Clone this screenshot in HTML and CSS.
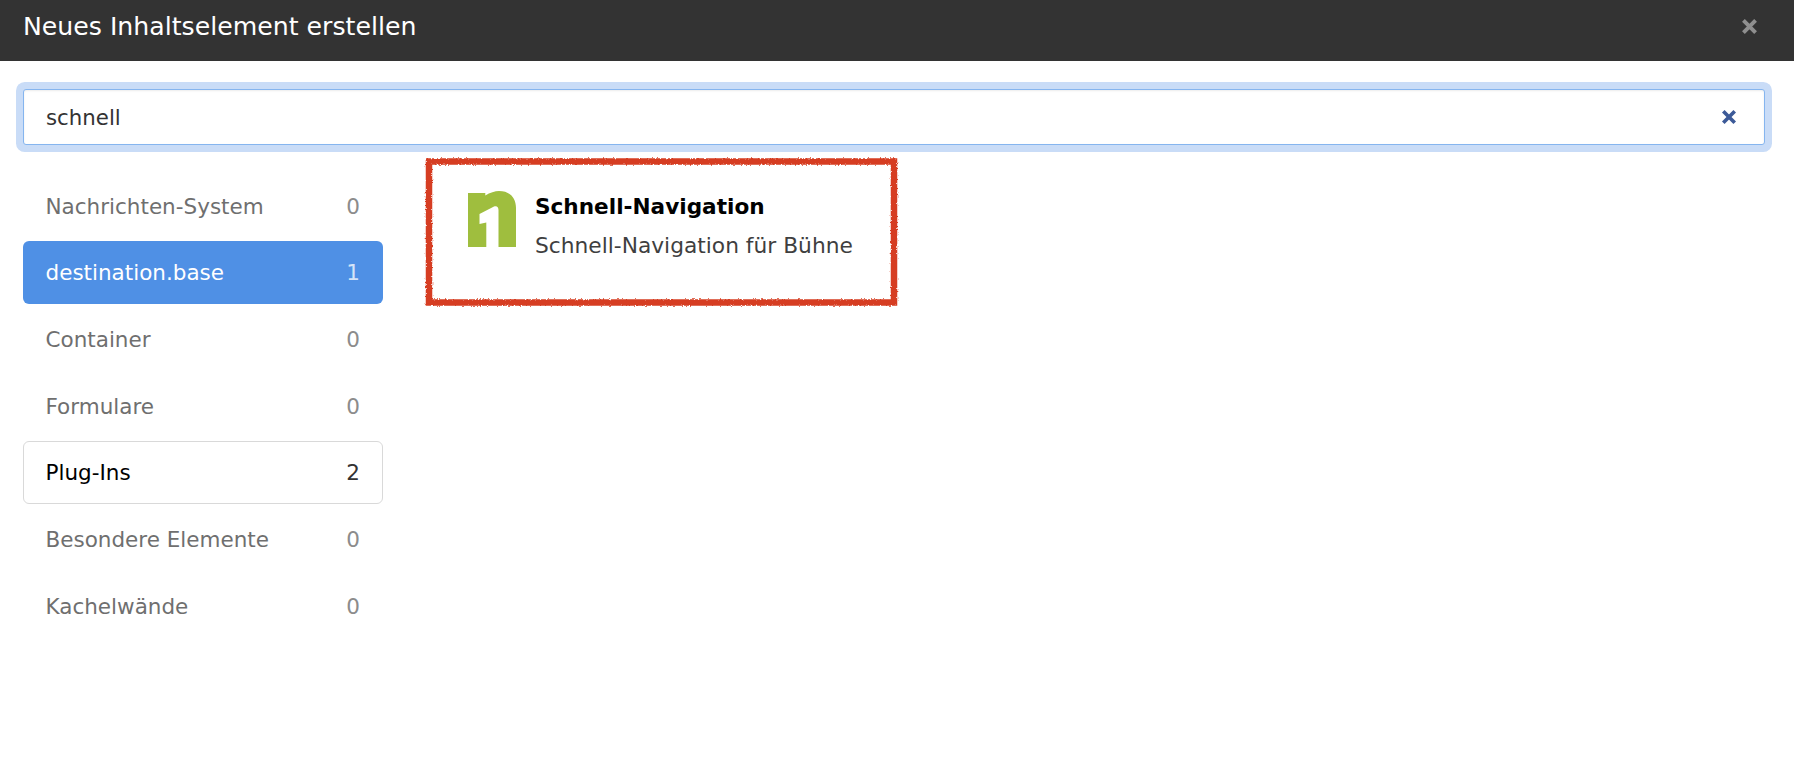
FILE: index.html
```html
<!DOCTYPE html>
<html lang="de">
<head>
    <meta charset="UTF-8">
    <meta name="viewport" content="width=device-width, initial-scale=1.0">
    <title>Neues Inhaltselement erstellen</title>
    <link rel="stylesheet" href="styles.css">
</head>
<body>
    <div class="modal-header">
        <h1 class="modal-title">Neues Inhaltselement erstellen</h1>
        <svg class="close-icon" viewBox="0 0 14 14"><path d="M2 2L12 12M12 2L2 12"/></svg>
    </div>
    <div class="modal-body">
        <div class="search">
            <input class="search-input" type="text" value="schnell">
            <svg class="clear-icon" viewBox="0 0 14 14"><path d="M2 2L12 12M12 2L2 12"/></svg>
        </div>
        <div class="content">
            <ul class="categories">
                <li class="category"><span>Nachrichten-System</span><span class="count">0</span></li>
                <li class="category active"><span>destination.base</span><span class="count">1</span></li>
                <li class="category"><span>Container</span><span class="count">0</span></li>
                <li class="category"><span>Formulare</span><span class="count">0</span></li>
                <li class="category outlined"><span>Plug-Ins</span><span class="count">2</span></li>
                <li class="category"><span>Besondere Elemente</span><span class="count">0</span></li>
                <li class="category"><span>Kachelwände</span><span class="count">0</span></li>
            </ul>
            <div class="results">
                <div class="element">
                    <svg class="scribble" viewBox="0 0 473 148">
                        <defs>
                            <filter id="rough" x="-3%" y="-6%" width="106%" height="112%">
                                <feTurbulence type="fractalNoise" baseFrequency="0.6" numOctaves="2" seed="4"/>
                                <feDisplacementMap in="SourceGraphic" scale="3"/>
                            </filter>
                        </defs>
                        <rect x="4" y="3.500" width="465" height="141" filter="url(#rough)"/>
                    </svg>
                    <svg class="logo" viewBox="0 0 48 56">
                        <path d="M0 2H17.300V4.500C22 1.500 27 0 31 0C42 0 48 7 48 17V56H30.500V19C30.500 15.500 28.500 14.500 26 15.500L11.500 23V33L18.300 31.500V56H0Z"/>
                    </svg>
                    <div class="element-text">
                        <div class="element-name">Schnell-Navigation</div>
                        <div class="element-desc">Schnell-Navigation für Bühne</div>
                    </div>
                </div>
            </div>
        </div>
    </div>
</body>
</html>
```

FILE: styles.css
```css
* {
    margin: 0;
    padding: 0;
    box-sizing: border-box;
    font-family: 'DejaVu Sans', Verdana, sans-serif;
}
body {
    background: #fff;
    height: 780px;
    overflow: hidden;
}
.modal-header {
    display: flex;
    align-items: center;
    justify-content: space-between;
    height: 61px;
    padding: 0 36px 8px 23px;
    background: #333;
}
.modal-title {
    font-size: 25.2px;
    font-weight: normal;
    color: #fff;
}
.close-icon {
    width: 17px;
    height: 17px;
    fill: none;
    stroke: #8f8f8f;
    stroke-width: 3.2;
}
.modal-body {
    padding: 28px 29px 0 23px;
}
.search {
    position: relative;
}
.search-input {
    display: block;
    width: 100%;
    height: 56px;
    padding: 0 22px;
    font-size: 21.3px;
    color: #333;
    background: #fff;
    border: 1px solid #85b5ef;
    border-radius: 3px;
    outline: none;
    box-shadow: 0 0 0 7px #c9dcf7, inset 0 1px 2px rgba(0, 0, 0, 0.08);
}
.clear-icon {
    position: absolute;
    top: 20px;
    right: 28px;
    width: 16px;
    height: 16px;
    fill: none;
    stroke: #3c5a98;
    stroke-width: 3.2;
}
.content {
    display: flex;
    gap: 42px;
}
.categories {
    display: grid;
    grid-auto-rows: 62.67px;
    gap: 4px;
    flex: none;
    width: 360px;
    padding-top: 29.4px;
    list-style: none;
}
.category {
    display: flex;
    align-items: center;
    justify-content: space-between;
    padding: 1px 22px 0 21.5px;
    font-size: 21.5px;
    color: #6f6f6f;
    border: 1px solid transparent;
    border-radius: 6px;
}
.count {
    color: #8c8c8c;
}
.category.active {
    background: #4f90e5;
    color: #fff;
}
.category.active .count {
    color: #d5e4f8;
}
.category.outlined {
    color: #000;
    border-color: #d9d9d9;
}
.category.outlined .count {
    color: #333;
}
.results {
    padding-top: 13px;
}
.element {
    position: relative;
    display: flex;
    gap: 19px;
    width: 473px;
    height: 148px;
    padding: 33px 0 0 43px;
}
.scribble {
    position: absolute;
    top: 0;
    left: 0;
    width: 473px;
    height: 148px;
    overflow: visible;
}
.scribble rect {
    fill: none;
    stroke: #d63c20;
    stroke-width: 6.5;
}
.logo {
    flex: none;
    width: 48px;
    height: 56px;
    fill: #9fbe3e;
}
.element-name {
    margin-top: 3px;
    font-size: 21.6px;
    font-weight: bold;
    color: #000;
}
.element-desc {
    margin-top: 14px;
    font-size: 21.75px;
    color: #3f3f3f;
}
```
